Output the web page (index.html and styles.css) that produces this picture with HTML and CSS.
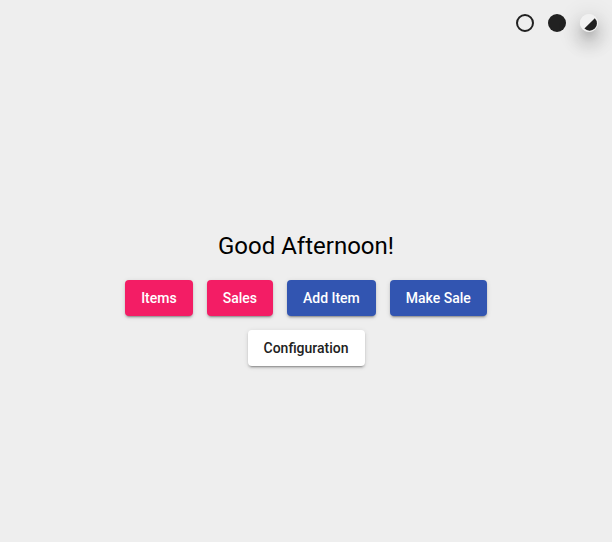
FILE: index.html
```html
<!DOCTYPE html>
<html lang="en">
<head>
<meta charset="utf-8">
<meta name="viewport" content="width=device-width, initial-scale=1">
<title>Home</title>
<link rel="stylesheet" href="styles.css">
</head>
<body>
<header class="themes">
  <button class="theme" type="button" aria-label="Light theme">
    <svg viewBox="0 0 18 18"><circle cx="9" cy="9" r="8" fill="none" stroke="#212121" stroke-width="2"/></svg>
  </button>
  <button class="theme" type="button" aria-label="Dark theme">
    <svg viewBox="0 0 18 18"><circle cx="9" cy="9" r="9" fill="#212121"/></svg>
  </button>
  <button class="theme theme-active" type="button" aria-label="Automatic theme" aria-pressed="true">
    <svg viewBox="0 0 18 18"><circle cx="9" cy="9" r="9" fill="#f1f1f1"/><path d="M14.8 4.2A7 7 0 0 1 4.4 14.6Z" fill="#212121"/></svg>
  </button>
</header>
<main class="home">
  <h1 class="greeting">Good Afternoon!</h1>
  <nav class="actions">
    <button class="btn btn-accent" type="button">Items</button>
    <button class="btn btn-accent" type="button">Sales</button>
    <button class="btn btn-primary" type="button">Add Item</button>
    <button class="btn btn-primary" type="button">Make Sale</button>
    <button class="btn" type="button">Configuration</button>
  </nav>
</main>
</body>
</html>
```
FILE: styles.css
```css
* {
  box-sizing: border-box;
}

body {
  margin: 0;
  min-height: 100vh;
  display: flex;
  flex-direction: column;
  background: #eeeeee;
  color: #000;
  font-family: Roboto, sans-serif;
}

.themes {
  display: flex;
  justify-content: flex-end;
  gap: 14px;
  padding: 14px;
}

.theme {
  width: 18px;
  height: 18px;
  padding: 0;
  border: 0;
  border-radius: 50%;
  background: none;
  cursor: pointer;
}

.theme svg {
  display: block;
}

.theme-active {
  box-shadow: 0 7px 8px -4px rgba(0, 0, 0, 0.2),
    0 12px 17px 2px rgba(0, 0, 0, 0.14),
    0 5px 22px 4px rgba(0, 0, 0, 0.12);
}

.home {
  flex: 1;
  display: flex;
  flex-direction: column;
  align-items: center;
  justify-content: center;
  gap: 18px;
  padding: 8px 16px 0;
}

.greeting {
  margin: 0;
  font-size: 24px;
  font-weight: 400;
  line-height: 32px;
}

.actions {
  display: flex;
  flex-wrap: wrap;
  justify-content: center;
  gap: 14px;
  max-width: 400px;
}

.btn {
  height: 36px;
  padding: 0 16px;
  border: 0;
  border-radius: 4px;
  background: #fff;
  color: #212121;
  font-family: inherit;
  font-size: 14px;
  font-weight: 500;
  line-height: 36px;
  cursor: pointer;
  box-shadow: 0 3px 1px -2px rgba(0, 0, 0, 0.2),
    0 2px 2px 0 rgba(0, 0, 0, 0.14),
    0 1px 5px 0 rgba(0, 0, 0, 0.12);
}

.btn-accent {
  background: #f31d65;
  color: #fff;
}

.btn-primary {
  background: #3255b1;
  color: #fff;
}
```
